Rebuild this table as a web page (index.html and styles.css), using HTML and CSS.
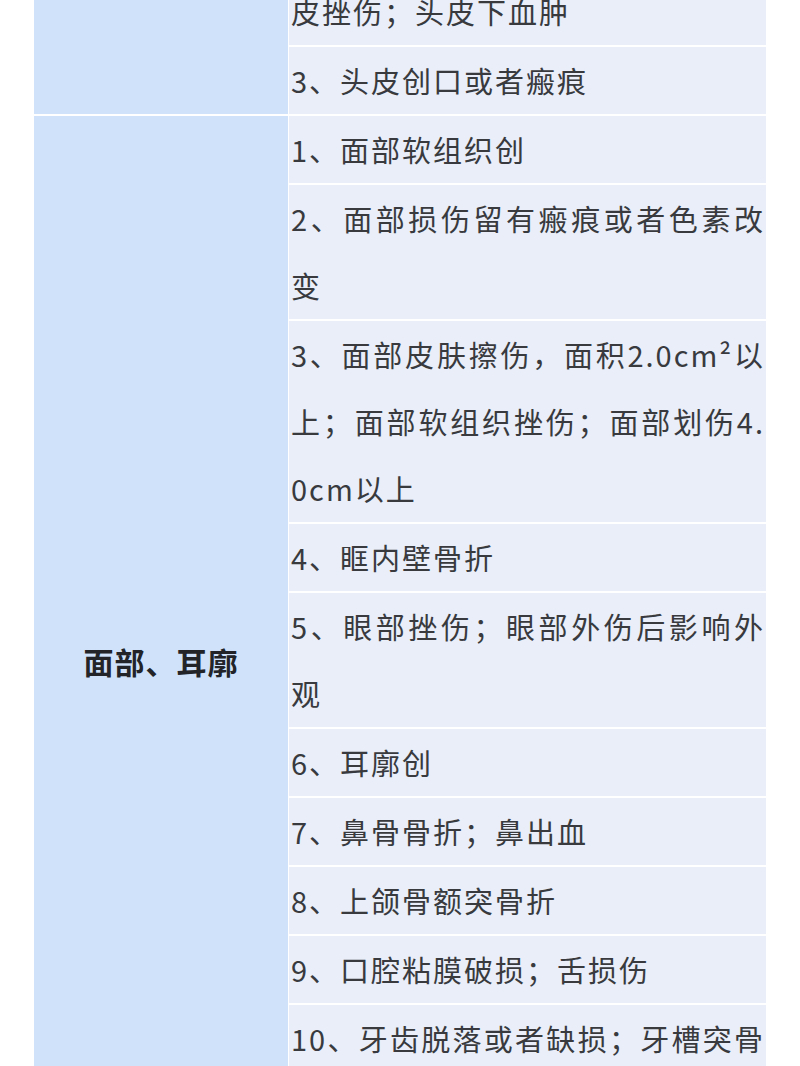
FILE: index.html
```html
<!DOCTYPE html>
<html lang="zh-CN">
<head>
<meta charset="utf-8">
<title>损伤程度表</title>
<link rel="stylesheet" href="styles.css">
</head>
<body>
<div class="table">
  <div class="group">
    <div class="label"></div>
    <div class="items">
      <div class="item">2、头皮擦伤面积5.0cm²以上；头皮挫伤；头皮下血肿</div>
      <div class="item">3、头皮创口或者瘢痕</div>
    </div>
  </div>
  <div class="group">
    <div class="label">面部、耳廓</div>
    <div class="items">
      <div class="item">1、面部软组织创</div>
      <div class="item">2、面部损伤留有瘢痕或者色素改变</div>
      <div class="item">3、面部皮肤擦伤，面积2.0cm²以上；面部软组织挫伤；面部划伤4.0cm以上</div>
      <div class="item">4、眶内壁骨折</div>
      <div class="item">5、眼部挫伤；眼部外伤后影响外观</div>
      <div class="item">6、耳廓创</div>
      <div class="item">7、鼻骨骨折；鼻出血</div>
      <div class="item">8、上颌骨额突骨折</div>
      <div class="item">9、口腔粘膜破损；舌损伤</div>
      <div class="item">10、牙齿脱落或者缺损；牙槽突骨折；牙齿松动2枚以上或者Ⅲ度松动1枚以上</div>
    </div>
  </div>
</div>
</body>
</html>
```

FILE: styles.css
```css
html, body {
  margin: 0;
  padding: 0;
  background: #ffffff;
}

body {
  font-family: "Noto Sans CJK SC", "Noto Sans", sans-serif;
  overflow: hidden;
  height: 1066px;
}

.table {
  width: 732px;
  margin: -89px 0 0 34px;
  display: flex;
  flex-direction: column;
  gap: 2px;
  background: #ffffff;
}

.group {
  display: grid;
  grid-template-columns: 254px 477px;
  column-gap: 1px;
}

.label {
  background: #cfe2f9;
  display: flex;
  align-items: center;
  justify-content: center;
  font-size: 30px;
  font-weight: 700;
  letter-spacing: 1px;
  color: #222428;
}

.items {
  display: flex;
  flex-direction: column;
  gap: 2px;
}

.item {
  background: #e9eef9;
  padding: 0 1px 0 2px;
  font-size: 29px;
  letter-spacing: 2px;
  line-height: 67px;
  color: #383a3e;
  text-align: justify;
  word-break: break-all;
}
```
